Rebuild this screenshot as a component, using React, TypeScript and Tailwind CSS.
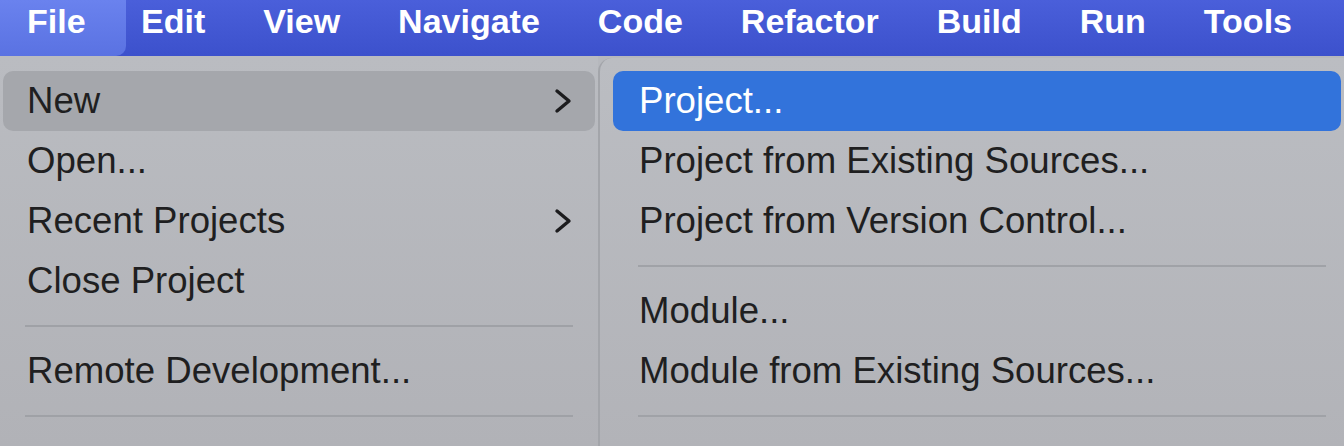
import React from "react";

const font = { fontFamily: '"Liberation Sans", Arial, sans-serif' };

const barItems = ["Edit", "View", "Navigate", "Code", "Refactor", "Build", "Run", "Tools"];

type Entry =
  | { kind: "item"; label: string; sub?: boolean; active?: boolean }
  | { kind: "sep" };

const fileMenu: Entry[] = [
  { kind: "item", label: "New", sub: true, active: true },
  { kind: "item", label: "Open..." },
  { kind: "item", label: "Recent Projects", sub: true },
  { kind: "item", label: "Close Project" },
  { kind: "sep" },
  { kind: "item", label: "Remote Development..." },
  { kind: "sep" },
];

const newMenu: Entry[] = [
  { kind: "item", label: "Project...", active: true },
  { kind: "item", label: "Project from Existing Sources..." },
  { kind: "item", label: "Project from Version Control..." },
  { kind: "sep" },
  { kind: "item", label: "Module..." },
  { kind: "item", label: "Module from Existing Sources..." },
  { kind: "sep" },
];

const Chevron = () => (
  <svg width="22" height="28" viewBox="0 0 22 28" fill="none" className="shrink-0">
    <polyline
      points="5,4 17,14 5,24"
      stroke="#1c1c1e"
      strokeWidth="3.4"
      strokeLinecap="round"
      strokeLinejoin="round"
    />
  </svg>
);

const App: React.FC = () => {
  return (
    <div className="w-[1344px] h-[446px] overflow-hidden bg-[#b6b8bd] flex flex-col" style={font}>
      {/* menu bar */}
      <div className="h-[56px] shrink-0 flex items-stretch bg-gradient-to-b from-[#4a5fda] to-[#3c51cc] text-white text-[34px] font-semibold">
        <div className="w-[126px] pl-[27px] pb-[14px] flex items-center rounded-br-[10px] bg-gradient-to-b from-[#6a82ee] to-[#5a72e2]">
          File
        </div>
        <div className="ml-[15px] pb-[14px] flex items-center gap-[58px]">
          {barItems.map((b) => (
            <span key={b}>{b}</span>
          ))}
        </div>
      </div>

      <div className="flex flex-1 text-[36.6px] text-[#1f1f21]">
        {/* file menu */}
        <div className="w-[598px] shrink-0 pt-[15px] px-[3px] bg-gradient-to-b from-[#babcc1] to-[#b1b2b7]">
          {fileMenu.map((e, i) =>
            e.kind === "sep" ? (
              <div key={i} className="h-[30px] flex items-center pl-[22px] pr-[22px]">
                <div className="h-[2px] w-full bg-[#9fa1a6]" />
              </div>
            ) : (
              <div
                key={i}
                className={`h-[60px] flex items-center justify-between pl-[24px] pr-[21px] rounded-[10px] ${
                  e.active ? "bg-[#a5a7ac]" : ""
                }`}
              >
                <span>{e.label}</span>
                {e.sub && <Chevron />}
              </div>
            ),
          )}
        </div>

        {/* new submenu */}
        <div className="flex-1 mt-[2px] pt-[13px] pl-[13px] pr-[3px] rounded-tl-[14px] border-l-2 border-[#a3a5aa] bg-gradient-to-b from-[#bbbdc2] to-[#b2b3b8]">
          {newMenu.map((e, i) =>
            e.kind === "sep" ? (
              <div key={i} className="h-[30px] flex items-center pl-[25px] pr-[15px]">
                <div className="h-[2px] w-full bg-[#a0a2a7]" />
              </div>
            ) : (
              <div
                key={i}
                className={`h-[60px] flex items-center pl-[26px] rounded-[10px] ${
                  e.active ? "bg-[#3273db] text-white" : ""
                }`}
              >
                {e.label}
              </div>
            ),
          )}
        </div>
      </div>
    </div>
  );
};

export default App;
